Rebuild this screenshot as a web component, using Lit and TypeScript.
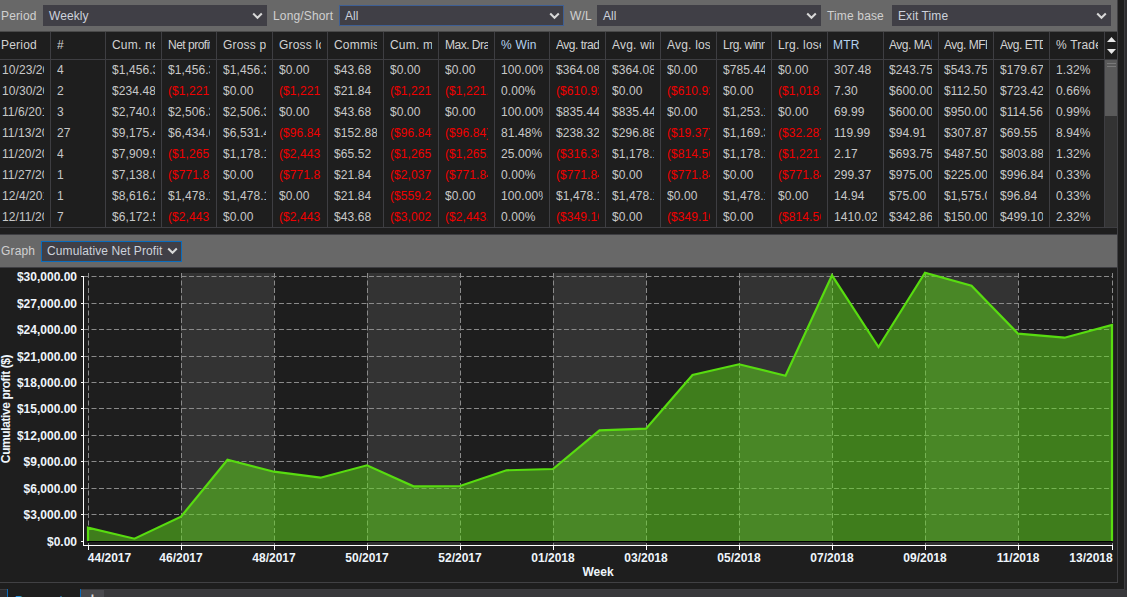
import { LitElement, html, css, svg } from "lit";
import { customElement } from "lit/decorators.js";

const COLS: [string, number][] = [
  ["Period", 51], ["#", 55], ["Cum. net profit", 56], ["Net profit", 55], ["Gross profit", 56], ["Gross loss", 55],
  ["Commission", 56], ["Cum. max", 55], ["Max. Drawdown", 56], ["% Win", 55], ["Avg. trade", 56], ["Avg. winner", 55],
  ["Avg. loser", 56], ["Lrg. winner", 55], ["Lrg. loser", 56], ["MTR", 56], ["Avg. MAE", 55], ["Avg. MFE", 55],
  ["Avg. ETD", 56], ["% Trades", 55],
];
const TIGHT = new Set([16, 17]);
const COND = new Set(["Avg. MAE", "Avg. MFE", "Avg. ETD", "Max. Drawdown", "Avg. trade", "Lrg. winner", "Net profit"]);

const ROWS: string[][] = [
  ["10/23/2017","4","$1,456.32","$1,456.32","$1,456.32","$0.00","$43.68","$0.00","$0.00","100.00%","$364.08","$364.08","$0.00","$785.44","$0.00","307.48","$243.75","$543.75","$179.67","1.32%"],
  ["10/30/2017","2","$234.48","($1,221.84)","$0.00","($1,221.84)","$21.84","($1,221.84)","($1,221.84)","0.00%","($610.92)","$0.00","($610.92)","$0.00","($1,018.00)","7.30","$600.00","$112.50","$723.42","0.66%"],
  ["11/6/2017","3","$2,740.80","$2,506.32","$2,506.32","$0.00","$43.68","$0.00","$0.00","100.00%","$835.44","$835.44","$0.00","$1,253.16","$0.00","69.99","$600.00","$950.00","$114.56","0.99%"],
  ["11/13/2017","27","$9,175.44","$6,434.64","$6,531.48","($96.84)","$152.88","($96.84)","($96.84)","81.48%","$238.32","$296.88","($19.37)","$1,169.32","($32.28)","119.99","$94.91","$307.87","$69.55","8.94%"],
  ["11/20/2017","4","$7,909.92","($1,265.52)","$1,178.16","($2,443.68)","$65.52","($1,265.52)","($1,265.52)","25.00%","($316.38)","$1,178.16","($814.56)","$1,178.16","($1,221.84)","2.17","$693.75","$487.50","$803.88","1.32%"],
  ["11/27/2017","1","$7,138.08","($771.84)","$0.00","($771.84)","$21.84","($2,037.36)","($771.84)","0.00%","($771.84)","$0.00","($771.84)","$0.00","($771.84)","299.37","$975.00","$225.00","$996.84","0.33%"],
  ["12/4/2017","1","$8,616.24","$1,478.16","$1,478.16","$0.00","$21.84","($559.20)","$0.00","100.00%","$1,478.16","$1,478.16","$0.00","$1,478.16","$0.00","14.94","$75.00","$1,575.00","$96.84","0.33%"],
  ["12/11/2017","7","$6,172.56","($2,443.68)","$0.00","($2,443.68)","$43.68","($3,002.88)","($2,443.68)","0.00%","($349.10)","$0.00","($349.10)","$0.00","($814.56)","1410.02","$342.86","$150.00","$499.10","2.32%"],
];

const X0 = 88, STEP = 46.5, Y0 = 541;
const PTS = [527.7,538.7,516.7,459.7,471.7,477.7,465.3,486.3,486,470.3,469,430.3,428.7,375,364.3,375.7,275.3,347,272.7,285.7,333.7,337.7,325];
const YL: [number, number][] = [[30,276],[27,303],[24,329],[21,356],[18,382],[15,408],[12,435],[9,461],[6,488],[3,514],[0,541]];
const XL: [string, number][] = [["44/2017",0],["46/2017",2],["48/2017",4],["50/2017",6],["52/2017",8],["01/2018",10],["03/2018",12],["05/2018",14],["07/2018",16],["09/2018",18],["11/2018",20],["13/2018",22]];
const xAt = (i: number) => (i === 22 ? 1112 : X0 + i * STEP);
const fmt = (v: number) => (v === 0 ? "$0.00" : `$${v},000.00`);

@customElement("app-root")
export class AppRoot extends LitElement {
  static styles = css`
    :host { display: flex; flex-direction: column; width: 1127px; height: 597px; overflow: hidden; background: #2d2d30; font: 12px "Liberation Sans", Arial, sans-serif; color: #c8c8c8; }
    .outer { width: 1125px; height: 590px; flex: none; box-sizing: border-box; background: #1e1e1e; border-right: 1px solid #3c3c3f; border-bottom: 1px solid #3c3c3f; }
    .frame { width: 1118px; height: 583px; box-sizing: border-box; background: #1e1e1e; border-right: 1px solid #414144; border-bottom: 1px solid #414144; display: flex; flex-direction: column; }
    .toolbar { height: 32px; background: #686868; border-bottom: 1px solid #4a4a4a; display: flex; align-items: center; box-sizing: border-box; flex: none; }
    .lbl { color: #d0d0d0; white-space: nowrap; flex: none; letter-spacing: .15px; box-sizing: border-box; }
    .sel { height: 21px; background: #403f46; color: #cdd2dc; display: flex; align-items: center; justify-content: space-between; padding: 0 4px 0 6px; box-sizing: border-box; margin: 0 6px; flex: none; letter-spacing: .1px; white-space: nowrap; }
    .sel.focus { box-shadow: inset 0 0 0 1px #3e5f94; }
    .sel.blue { box-shadow: inset 0 0 0 1px #0a6cbc; }
    .sel svg { flex: none; }
    .table-wrap { display: flex; height: 196px; flex: none; border-bottom: 1px solid #3e3e42; box-sizing: border-box; overflow: hidden; }
    .table { width: 1105px; flex: none; }
    .row { display: flex; height: 21px; }
    .row.head { height: 28px; border-bottom: 1px solid #3e3e42; box-sizing: border-box; }
    .cell { box-sizing: border-box; border-right: 1px solid #3e3e42; padding: 0 6px; white-space: nowrap; line-height: 21px; flex: none; }
    .cell.tight { padding-left: 5px; }
    .cell div { overflow: hidden; letter-spacing: .08px; }
    .row.head .cell { line-height: 27px; color: #d2d2d2; }
    .row.head .cell div { letter-spacing: .2px; }
    .row.head .cell.cond div { letter-spacing: -.5px; }
    .cell.first { padding-left: 2px; }
    .row.head .cell.first { padding-left: 1px; }
    .cell.neg { color: #f00000; }
    .row.head .cell.sorted { color: #b4d2ee; }
    .row.head .cell.mtr { padding-left: 5px; }
    .side { width: 12px; flex: none; display: flex; flex-direction: column; background: #333; }
    .arrows { height: 28px; background: #1e1e1e; display: flex; flex-direction: column; align-items: center; justify-content: center; gap: 7px; border-bottom: 1px solid #3e3e42; box-sizing: border-box; flex: none; }
    .thumb { height: 56px; background: #5a5a5a; flex: none; display: flex; flex-direction: column; align-items: center; padding-top: 3px; gap: 2px; box-sizing: border-box; }
    .thumb i { display: block; width: 9px; height: 1px; background: #7a7a7a; }
    .gap { height: 6px; flex: none; }
    .graphbar { height: 34px; background: #686868; display: flex; align-items: center; flex: none; border-top: 1px solid #3e3e42; border-bottom: 1px solid #3e3e42; box-sizing: border-box; }
    .chart { display: block; flex: none; }
    .ytext { font: bold 12px "Liberation Sans", Arial, sans-serif; fill: #eef5fb; }
    .ytitle { font: bold 12px "Liberation Sans", Arial, sans-serif; letter-spacing: -.4px; fill: #eef5fb; }
    .tabs { flex: 1; min-height: 0; display: flex; padding-left: 7px; margin-top: -1px; }
    .tab { width: 74px; box-sizing: border-box; background: #1e1e1e; border-left: 1px solid #0a6cbc; border-right: 1px solid #0a6cbc; color: #2f97d8; padding: 5px 0 0 7px; line-height: 14px; overflow: hidden; flex: none; }
    .plus { width: 23px; margin-top: 1px; background: #49494d; flex: none; color: #d8d8d8; text-align: center; line-height: 12px; padding-top: 3px; box-sizing: border-box; font-size: 16px; font-weight: bold; overflow: hidden; }
    .rest { flex: 1; margin-top: 1px; background: #38383b; }
  `;

  private chev() {
    return html`<svg width="11" height="8" viewBox="0 0 11 8"><path d="M1.2 1.5 L5.5 5.8 L9.8 1.5" fill="none" stroke="#d8d8d8" stroke-width="2"/></svg>`;
  }

  private lbl(text: string, w: number, pad = 0) {
    return html`<span class="lbl" style="width:${w}px;padding-left:${pad}px">${text}</span>`;
  }

  private sel(text: string, w: number, cls = "") {
    return html`<div class="sel ${cls}" style="width:${w}px"><span>${text}</span>${this.chev()}</div>`;
  }

  private chart() {
    const pts = PTS.map((y, i) => `L${xAt(i)} ${y}`).join(" ");
    const area = `M${xAt(0)} ${Y0} ${pts} L${xAt(22)} ${Y0} Z`;
    const line = `M${xAt(0)} ${Y0} ${pts} L${xAt(22)} ${Y0}`;
    const bands = [2, 6, 10, 14, 18];
    return html`<svg class="chart" width="1117" height="314" viewBox="0 268 1117 314">
      ${bands.map((b) => svg`<rect x=${xAt(b)} y="273" width="93" height="272" fill="#333"/>`)}
      ${XL.map(([, i]) => svg`<line x1=${Math.floor(xAt(i)) + 0.5} x2=${Math.floor(xAt(i)) + 0.5} y1="273" y2="545" stroke="#8a8a8a" stroke-dasharray="5 2.5"/>`)}
      ${YL.filter(([v]) => v !== 0).map(([, y]) => svg`<line x1="84" x2="1112" y1=${y + 0.5} y2=${y + 0.5} stroke="#8a8a8a" stroke-dasharray="5 2.5"/>`)}
      <path d=${area} fill="#60dc1a" fill-opacity="0.5"/>
      <rect x="88" y="541" width="1024" height="1" fill="#000"/>
      <path d=${line} fill="none" stroke="#58dc10" stroke-width="2.2"/>
      <line x1="83.5" x2="83.5" y1="276" y2="546" stroke="#fff"/>
      <line x1="83" x2="1113" y1="545.5" y2="545.5" stroke="#fff"/>
      ${YL.map(([v, y]) => svg`<line x1="81" x2="84" y1=${y + 0.5} y2=${y + 0.5} stroke="#fff"/>
        <text class="ytext" x="77" y=${y + 5} text-anchor="end">${fmt(v)}</text>`)}
      ${XL.map(([t, i]) => svg`<line x1=${Math.floor(xAt(i)) + 0.5} x2=${Math.floor(xAt(i)) + 0.5} y1="545" y2="550" stroke="#fff"/>
        <text class="ytext" x=${i === 0 ? 109.5 : i === 22 ? 1091 : xAt(i)} y="562" text-anchor="middle">${t}</text>`)}
      <text class="ytext" x="598" y="576" text-anchor="middle">Week</text>
      <text class="ytitle" transform="translate(9.5 409) rotate(-90)" text-anchor="middle">Cumulative profit ($)</text>
    </svg>`;
  }

  render() {
    return html`
      <div class="outer">
        <div class="frame">
          <div class="toolbar">
            ${this.lbl("Period", 37, 1)}${this.sel("Weekly", 224)}
            ${this.lbl("Long/Short", 60)}${this.sel("All", 225, "focus")}
            ${this.lbl("W/L", 21)}${this.sel("All", 224)}
            ${this.lbl("Time base", 59)}${this.sel("Exit Time", 219)}
          </div>
          <div class="table-wrap">
            <div class="table">
              <div class="row head">
                ${COLS.map(([n, w], i) => html`<div class="cell ${i === 0 ? "first" : ""} ${TIGHT.has(i) ? "tight" : ""} ${COND.has(n) ? "cond" : ""} ${n === "MTR" ? "mtr" : ""} ${n === "% Win" || n === "MTR" ? "sorted" : ""}" style="width:${w}px"><div>${n}</div></div>`)}
              </div>
              ${ROWS.map((r) => html`<div class="row">
                ${r.map((v, i) => html`<div class="cell ${i === 0 ? "first" : ""} ${TIGHT.has(i) ? "tight" : ""} ${v.startsWith("(") ? "neg" : ""}" style="width:${COLS[i][1]}px"><div>${v}</div></div>`)}
              </div>`)}
            </div>
            <div class="side">
              <div class="arrows">
                <svg width="9" height="5" viewBox="0 0 9 5"><path d="M4.5 0 L9 5 H0 Z" fill="#e8e8e8"/></svg>
                <svg width="9" height="5" viewBox="0 0 9 5"><path d="M0 0 H9 L4.5 5 Z" fill="#e8e8e8"/></svg>
              </div>
              <div class="thumb"><i></i><i></i></div>
            </div>
          </div>
          <div class="gap"></div>
          <div class="graphbar">
            ${this.lbl("Graph", 35, 1)}${this.sel("Cumulative Net Profit", 141, "blue")}
          </div>
          ${this.chart()}
        </div>
      </div>
      <div class="tabs">
        <div class="tab">Research</div>
        <div class="plus">+</div>
        <div class="rest"></div>
      </div>
    `;
  }
}
